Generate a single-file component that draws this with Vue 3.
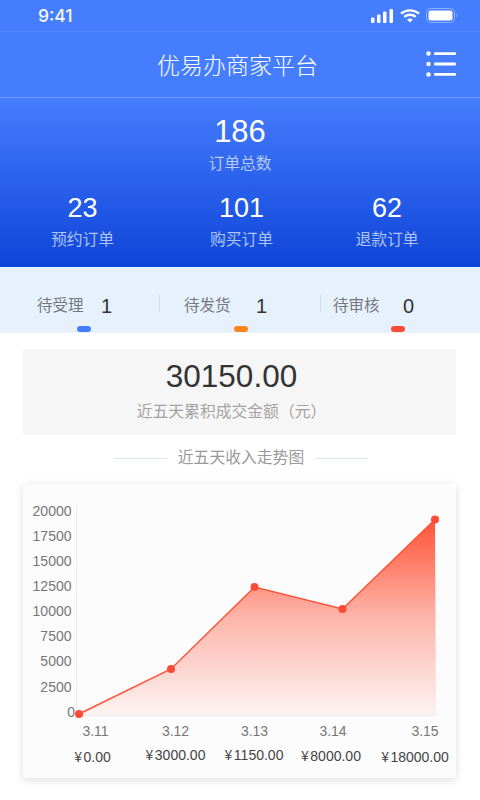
<script setup>
const stats = [
  { n: '23', l: '预约订单' },
  { n: '101', l: '购买订单' },
  { n: '62', l: '退款订单' }
]
const tabs = [
  { l: '待受理', n: '1', c: '#457dff', cls: 'a' },
  { l: '待发货', n: '1', c: '#ff8419', cls: 'b' },
  { l: '待审核', n: '0', c: '#ff4b36', cls: 'c' }
]
const yLabels = ['20000', '17500', '15000', '12500', '10000', '7500', '5000', '2500']
const pts = [[79, 714], [171, 669], [254.5, 587], [342.5, 609], [435, 519.5]]
const line = pts.map(p => p.join(',')).join(' ')
const area = `79,715 ${line} 436,715`
const xl = [[95.5, '3.11'], [175.5, '3.12'], [254.5, '3.13'], [333, '3.14'], [425, '3.15']]
const vals = [
  [92.5, 761.5, '0.00'],
  [175.5, 760, '3000.00'],
  [254, 760, '1150.00'],
  [331, 761, '8000.00'],
  [415, 762, '18000.00']
]
</script>

<template>
  <div class="page">
    <header class="hero">
      <div class="status">
        <span class="time">9:41</span>
        <div class="status-icons">
          <svg width="23" height="14" viewBox="0 0 23 14">
            <rect x="0" y="8.5" width="3.5" height="5.5" rx="1" fill="#fff" />
            <rect x="6" y="5.5" width="3.5" height="8.5" rx="1" fill="#fff" />
            <rect x="12" y="2.5" width="3.5" height="11.5" rx="1" fill="#fff" />
            <rect x="18.5" y="0" width="3.5" height="14" rx="1" fill="#fff" />
          </svg>
          <svg width="20" height="14" viewBox="0 0 20 14">
            <path d="M1 4.6C6 .2 14 .2 19 4.6" fill="none" stroke="#fff" stroke-width="2.3" />
            <path d="M4.2 7.9C7.6 5 12.4 5 15.8 7.9" fill="none" stroke="#fff" stroke-width="2.3" />
            <path d="M7.1 10.6 10 13.6 12.9 10.6C11.2 9.2 8.8 9.2 7.1 10.6Z" fill="#fff" />
          </svg>
          <svg width="32" height="15" viewBox="0 0 32 15">
            <rect x="0.5" y="0.5" width="28" height="14" rx="4" fill="none" stroke="#8fb0ff" />
            <rect x="2.5" y="2.5" width="24" height="10" rx="2.2" fill="#fff" />
            <path d="M30 5.5c1.2.4 1.2 3.6 0 4z" fill="#8fb0ff" />
          </svg>
        </div>
      </div>
      <div class="nav">
        <h1 class="title">优易办商家平台</h1>
        <svg class="menu" width="30" height="26" viewBox="0 0 30 26">
          <circle cx="2.5" cy="2.5" r="2.2" fill="#fff" />
          <circle cx="2.5" cy="13" r="2.2" fill="#fff" />
          <circle cx="2.5" cy="23.5" r="2.2" fill="#fff" />
          <rect x="8" y="1.2" width="22" height="2.8" rx="1" fill="#fff" />
          <rect x="8" y="11.6" width="22" height="2.8" rx="1" fill="#fff" />
          <rect x="8" y="22" width="22" height="2.8" rx="1" fill="#fff" />
        </svg>
      </div>
      <div class="total">
        <div class="total-n">186</div>
        <div class="total-l">订单总数</div>
      </div>
      <div class="stats">
        <div v-for="s in stats" :key="s.l" class="stat">
          <div class="stat-n">{{ s.n }}</div>
          <div class="stat-l">{{ s.l }}</div>
        </div>
      </div>
    </header>

    <section class="tabs">
      <div v-for="t in tabs" :key="t.l" class="tab" :class="t.cls">
        <span class="tab-l">{{ t.l }}</span>
        <span class="tab-n">{{ t.n }}</span>
        <i class="dot" :style="{ background: t.c }"></i>
      </div>
    </section>

    <section class="summary">
      <div class="amount">30150.00</div>
      <div class="amount-l">近五天累积成交金额（元）</div>
    </section>

    <div class="heading">
      <span class="rule"></span>
      <span class="heading-t">近五天收入走势图</span>
      <span class="rule"></span>
    </div>

    <section class="chart-card">
      <svg class="chart" width="480" height="294" viewBox="0 484 480 294">
        <defs>
          <linearGradient id="fillG" x1="0" y1="519" x2="0" y2="715" gradientUnits="userSpaceOnUse">
            <stop offset="0" stop-color="#ff5237" />
            <stop offset="0.5" stop-color="#ff5237" stop-opacity="0.42" />
            <stop offset="1" stop-color="#ff5237" stop-opacity="0.05" />
          </linearGradient>
        </defs>
        <line x1="76.5" y1="503" x2="76.5" y2="716" stroke="#eeeeee" stroke-width="1" />
        <line x1="76" y1="715.5" x2="436" y2="715.5" stroke="#eeeeee" stroke-width="1.5" />
        <polygon :points="area" fill="url(#fillG)" />
        <polyline :points="line" fill="none" stroke="#ff5237" stroke-width="1.5" />
        <circle v-for="p in pts" :key="p[0]" :cx="p[0]" :cy="p[1]" r="4" fill="#ff4b36" />
        <text
          v-for="(y, i) in yLabels"
          :key="y"
          class="axis"
          x="71.5"
          :y="515.5 + i * 25.15"
          text-anchor="end"
        >{{ y }}</text>
        <text class="axis" x="75" y="716.5" text-anchor="end">0</text>
        <text
          v-for="x in xl"
          :key="x[1]"
          class="axis"
          :x="x[0]"
          y="736"
          text-anchor="middle"
        >{{ x[1] }}</text>
        <text
          v-for="v in vals"
          :key="v[2]"
          class="val"
          :x="v[0]"
          :y="v[1]"
          text-anchor="middle"
        ><tspan class="yen">¥</tspan><tspan dx="1.5">{{ v[2] }}</tspan></text>
      </svg>
    </section>
  </div>
</template>

<style>
html, body { margin: 0; background: #fff; }
</style>

<style scoped>
.page {
  width: 480px;
  height: 800px;
  overflow: hidden;
  background: #fff;
  font-family: "Liberation Sans", "Noto Sans CJK SC", sans-serif;
}
.hero {
  height: 267px;
  color: #fff;
  background: linear-gradient(180deg, #457dff 0, #457dff 98px, #0f45d8 100%);
}
.status {
  height: 32px;
  box-sizing: border-box;
  display: flex;
  align-items: center;
  justify-content: space-between;
  padding: 0 22px 0 38px;
  border-bottom: 1px solid #5288ff;
}
.time {
  font-family: Inter, sans-serif;
  font-size: 17.5px;
  font-weight: 500;
  color: #f4f7ff;
}
.status-icons { display: flex; align-items: center; gap: 6px; }
.nav {
  height: 66px;
  box-sizing: border-box;
  position: relative;
  display: flex;
  align-items: center;
  justify-content: center;
  border-bottom: 1px solid #6e9aff;
  padding: 3px 5px 0 0;
}
.title { margin: 0; font-size: 23px; font-weight: 300; line-height: 30px; }
.menu { position: absolute; right: 24px; top: 19px; }
.total { text-align: center; padding-top: 17px; }
.total-n { font-size: 31px; line-height: 34px; }
.total-l { font-size: 15.8px; line-height: 22px; margin-top: 4px; color: #b6caf8; }
.stats { display: flex; margin-top: 17px; }
.stats .stat { text-align: center; }
.stats .stat:nth-child(1) { flex: 0 0 165px; }
.stats .stat:nth-child(2) { flex: 0 0 153px; }
.stats .stat:nth-child(3) { flex: 0 0 138px; }
.stat-n { font-size: 27px; line-height: 32px; }
.stat-l { font-size: 15.8px; line-height: 22px; margin-top: 5px; color: #aec4f5; }
.tabs {
  height: 66px;
  display: flex;
  background: #e6f1fc;
}
.tab { position: relative; flex: 0 0 161px; height: 66px; }
.tab + .tab::before {
  content: "";
  position: absolute;
  left: -2px;
  top: 28px;
  width: 1px;
  height: 17px;
  background: #d4dee8;
}
.tab-l {
  position: absolute;
  top: 28px;
  font-size: 15.5px;
  line-height: 22px;
  color: #74787c;
}
.tab-n {
  position: absolute;
  top: 26px;
  font-size: 20px;
  line-height: 26px;
  color: #333;
}
.dot {
  position: absolute;
  top: 59px;
  width: 13.5px;
  height: 6px;
  border-radius: 3px;
}
.a .tab-l { left: 37px; } .a .tab-n { left: 101px; } .a .dot { left: 77px; }
.b .tab-l { left: 23px; } .b .tab-n { left: 95px; } .b .dot { left: 73px; }
.c { flex-basis: 158px; }
.c .tab-l { left: 11px; } .c .tab-n { left: 81px; } .c .dot { left: 69px; }
.summary {
  margin: 16px 24px 0 23px;
  height: 86px;
  background: #f6f6f6;
  border-radius: 2px;
  text-align: center;
  padding-right: 16px;
  box-sizing: border-box;
}
.amount { font-size: 31.5px; line-height: 38px; padding-top: 8px; color: #333; }
.amount-l { font-size: 15.8px; line-height: 22px; margin-top: 6px; color: #a3a3a3; }
.heading {
  display: flex;
  align-items: center;
  justify-content: center;
  gap: 11px;
  height: 22px;
  margin-top: 12px;
  padding-left: 2px;
}
.heading-t { font-size: 15.8px; line-height: 22px; color: #999; }
.rule { width: 53px; height: 1px; background: #dde4ec; }
.chart-card {
  margin: 15px 24px 0 23px;
  height: 294px;
  position: relative;
  background: #fcfcfc;
  border-radius: 2px;
  box-shadow: 0 2px 8px rgba(0, 0, 0, .14);
}
.chart { position: absolute; left: -23px; top: 0; display: block; }
.axis { font-size: 14px; fill: #777; }
.val { font-size: 14px; fill: #444; }
.yen { font-family: "Noto Sans CJK SC", sans-serif; }
</style>
